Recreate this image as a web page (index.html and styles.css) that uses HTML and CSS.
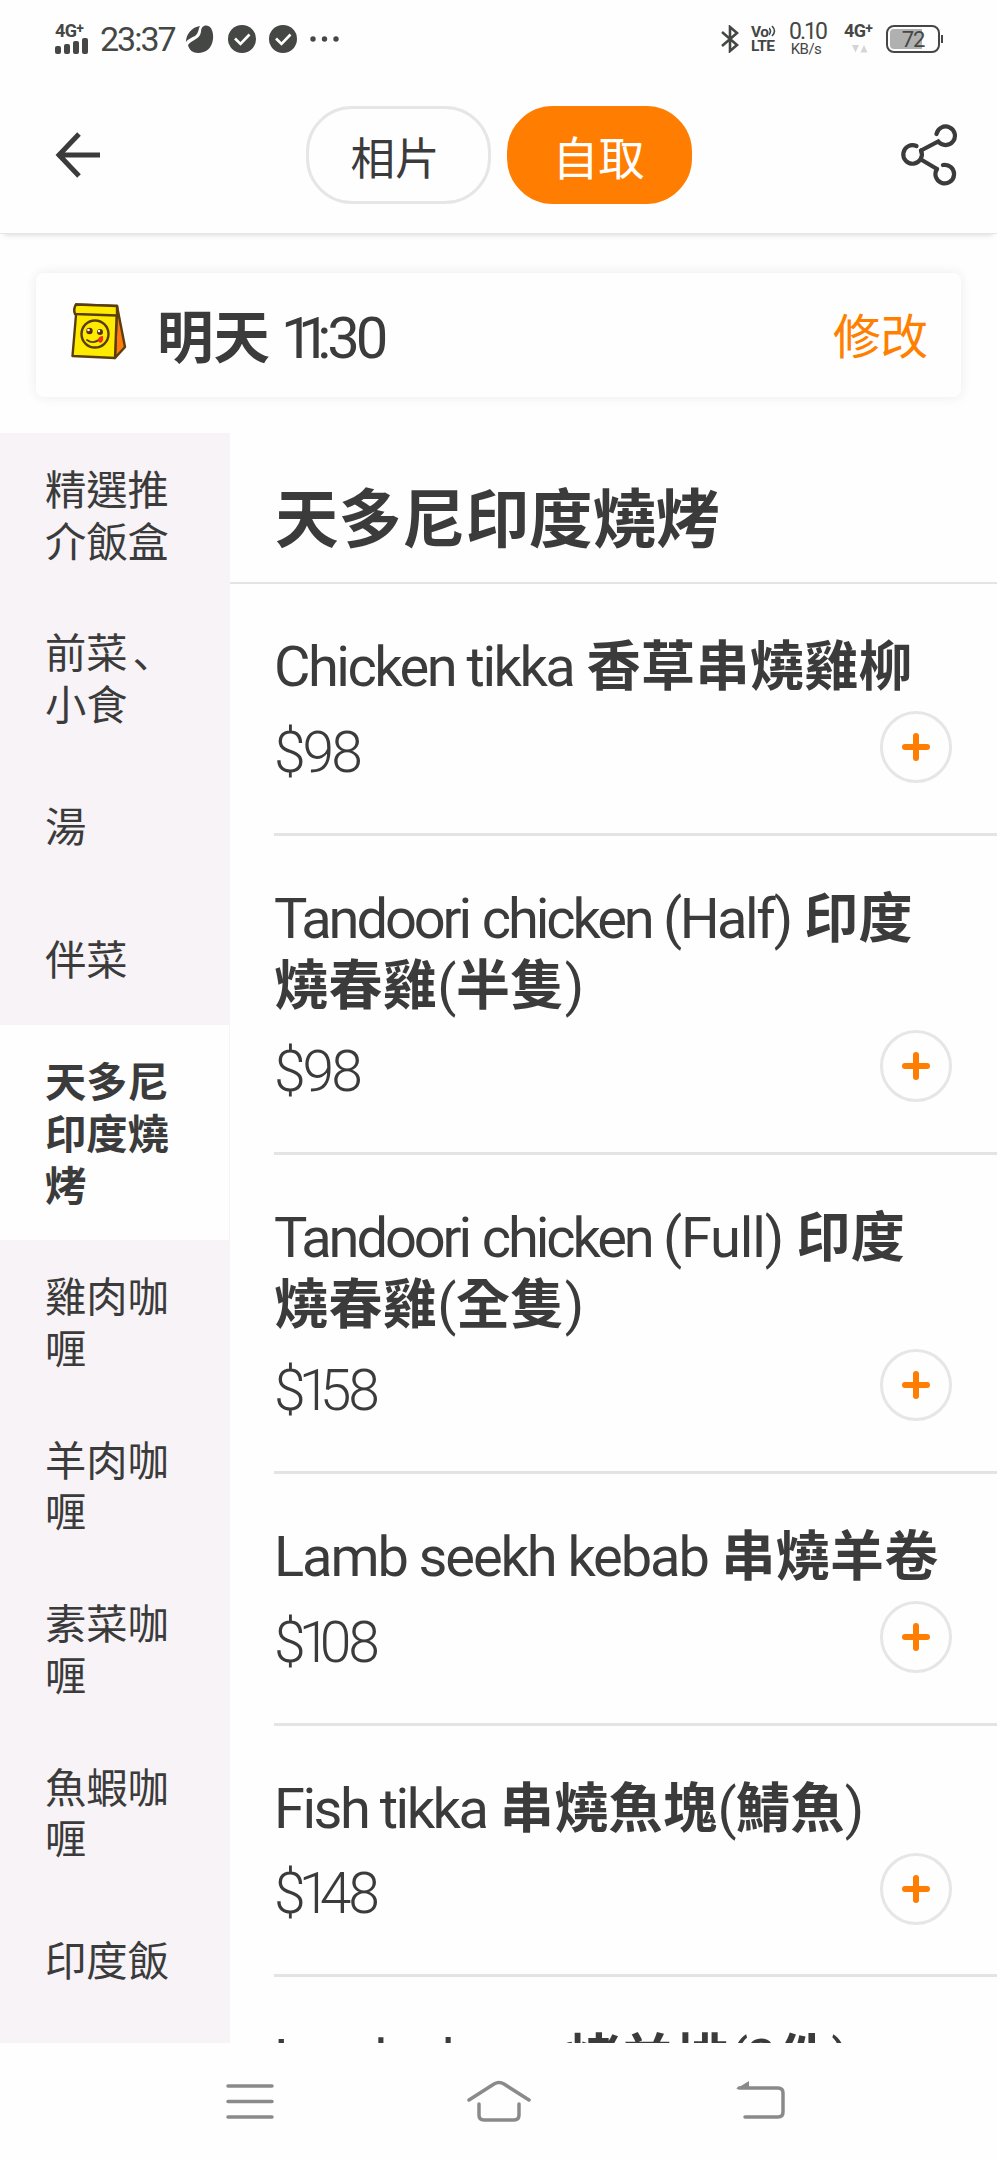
FILE: index.html
```
<!DOCTYPE html>
<html lang="zh-HK">
<head>
  <meta charset="UTF-8" />
  <meta name="viewport" content="width=device-width, initial-scale=1" />
  <title>天多尼印度燒烤</title>
  <link rel="stylesheet" href="styles.css">
</head>
<body>
  <div class="status-bar">
    <div class="signal">
      <span class="net">4G<sup>+</sup></span>
      <svg width="34" height="16" viewBox="0 0 34 16" fill="#454745">
        <rect x="0" y="8" width="6" height="8" rx="2"/>
        <rect x="9" y="6" width="6" height="10" rx="2"/>
        <rect x="18" y="3" width="6" height="13" rx="2"/>
        <rect x="27" y="0" width="6" height="16" rx="2"/>
      </svg>
    </div>
    <span class="clock">23:37</span>
    <svg class="leaf" width="28" height="28" viewBox="0 0 28 28" fill="#454745">
      <path d="M0 17C0 9 6 2 14 1C12 4 13 8 9 11C5 13 2 14 0 17Z"/>
      <path d="M2 20C6 15 11 15 14 10C16 6 14 3 18 1C23-1 28 4 27 14C26 23 20 28 12 28C7 28 3 25 2 20Z"/>
    </svg>
    <svg class="check" width="28" height="28" viewBox="0 0 28 28">
      <circle cx="14" cy="14" r="14" fill="#454745"/>
      <path d="M7 13.500l5.500 5.500L21.500 9.500" fill="none" stroke="#fff" stroke-width="2.600"/>
    </svg>
    <svg class="check" width="28" height="28" viewBox="0 0 28 28">
      <circle cx="14" cy="14" r="14" fill="#454745"/>
      <path d="M7 13.500l5.500 5.500L21.500 9.500" fill="none" stroke="#fff" stroke-width="2.600"/>
    </svg>
    <svg class="dots" width="30" height="6" viewBox="0 0 30 6" fill="#454745">
      <circle cx="3" cy="3" r="2.700"/><circle cx="14.500" cy="3" r="2.700"/><circle cx="26" cy="3" r="2.700"/>
    </svg>

    <div class="status-right">
      <svg class="bt" width="18" height="28" viewBox="0 0 18 28" fill="none" stroke="#454745" stroke-width="2.600">
        <path d="M1 7l15 13-7 6V2l7 6L1 21"/>
      </svg>
      <div class="volte">
        <span>Vo<svg width="9" height="12" viewBox="0 0 9 12" fill="none" stroke="#454745" stroke-width="1.600"><path d="M0 3q3 3 0 7M3 1q5 5 0 10"/></svg></span>
        <span>LTE</span>
      </div>
      <div class="speed">
        <span class="rate">0.10</span>
        <span class="unit">KB/s</span>
      </div>
      <div class="data">
        <span class="net">4G<sup>+</sup></span>
        <svg width="16" height="8" viewBox="0 0 16 8" fill="#d5d5d5"><path d="M0 0h7L3.500 7.500zM8.500 7.500h7L12 0z"/></svg>
      </div>
      <div class="battery"><span>72</span></div>
    </div>
  </div>

  <header class="top-nav">
    <svg class="back" width="46" height="46" viewBox="0 0 46 46" fill="none" stroke="#3b3b3b" stroke-width="5">
      <path d="M24 2L4 23l20 21M4 23h41"/>
    </svg>
    <div class="tabs">
      <button class="tab">相片</button>
      <button class="tab active">自取</button>
    </div>
    <svg class="share" width="58" height="62" viewBox="0 0 58 62" fill="none" stroke="#3b3b3b" stroke-width="4.200" stroke-linecap="round">
      <path d="M36.500 10A9.300 9.300 0 1 1 38.300 17.500L21 26.500"/>
      <path d="M16.500 22A9.300 9.300 0 1 0 21 26.500M21 35.500L37 45"/>
      <path d="M43 41A9.300 9.300 0 1 1 37 45"/>
    </svg>
  </header>

  <div class="pickup">
    <svg class="bag" width="56" height="58" viewBox="0 0 56 58" stroke="#5a3d0c" stroke-width="2.400" stroke-linejoin="round" stroke-linecap="round">
      <path d="M46 3l8 41-10 11z" fill="#ff7a10"/>
      <path d="M5 1.500L46 3l-2 52L1.500 53 5 12z" fill="#ffeb00"/>
      <path d="M5 1.500L46 3v9.500L4 11Q2 6 5 1.500z" fill="#ffeb00"/>
      <circle cx="24" cy="31" r="13.500" fill="#ffeb00"/>
      <circle cx="18.500" cy="28" r="3.200" fill="#5a2e0c" stroke="none"/>
      <circle cx="29" cy="29" r="3" fill="#5a2e0c" stroke="none"/>
      <circle cx="17.500" cy="27" r="1.300" fill="#fff" stroke="none"/>
      <circle cx="28" cy="28" r="1.200" fill="#fff" stroke="none"/>
      <path d="M16 37q7 5 14-2" fill="none" stroke-width="1.800"/>
      <path d="M27 38q0-5 5-5 1 6-3 7z" fill="#f0301c" stroke="none"/>
    </svg>
    <div class="time"><b>明天</b> <span class="hour">11</span><span class="minute">:30</span></div>
    <a class="edit">修改</a>
  </div>

  <div class="content">
    <ul class="categories">
      <li>精選推介飯盒</li>
      <li><div>前菜<span class="comma" lang="ja">、</span>小食</div></li>
      <li>湯</li>
      <li>伴菜</li>
      <li class="active">天多尼印度燒烤</li>
      <li>雞肉咖喱</li>
      <li>羊肉咖喱</li>
      <li>素菜咖喱</li>
      <li>魚蝦咖喱</li>
      <li>印度飯</li>
    </ul>

    <main class="menu">
      <h1>天多尼印度燒烤</h1>
      <div class="item">
        <h2>Chicken tikka <b>香草串燒雞柳</b></h2>
        <div class="row"><span class="price">$98</span><button class="add"></button></div>
      </div>
      <div class="item">
        <h2><span class="narrow">Tandoori chicken</span> (Half) <b>印度燒春雞</b>(<b>半隻</b>)</h2>
        <div class="row"><span class="price">$98</span><button class="add"></button></div>
      </div>
      <div class="item">
        <h2><span class="narrow">Tandoori chicken</span> <span class="wider">(Full)</span> <b>印度燒春雞</b>(<b>全隻</b>)</h2>
        <div class="row"><span class="price">$<span class="one">1</span>58</span><button class="add"></button></div>
      </div>
      <div class="item">
        <h2><span class="wide">Lamb seekh kebab</span> <b>串燒羊卷</b></h2>
        <div class="row"><span class="price">$<span class="one">1</span>08</span><button class="add"></button></div>
      </div>
      <div class="item">
        <h2>Fish tikka <b>串燒魚塊</b>(<b>鯖魚</b>)</h2>
        <div class="row"><span class="price">$<span class="one">1</span>48</span><button class="add"></button></div>
      </div>
      <div class="item">
        <h2><span class="narrow">Lamb chops</span> <b>烤羊排</b>(3<b>件</b>)</h2>
      </div>
    </main>
  </div>

  <nav class="bottom-nav">
    <svg width="66" height="46" viewBox="0 0 66 46"><path d="M11 8h44M11 23.500h44M11 39h44"/></svg>
    <svg width="66" height="46" viewBox="0 0 66 46"><path d="M3 22L28 6q5-3 10 0l25 16M13 26v11q0 5 5 5h30q5 0 5-5V26"/></svg>
    <svg width="66" height="46" viewBox="0 0 66 46"><path d="M12 10h39q5 0 5 5v19q0 5-5 5H18"/><path d="M9 11L22 3v8z" fill="#8a8a8a" stroke="none"/></svg>
  </nav>
</body>
</html>
```
FILE: styles.css
```
* {
  box-sizing: border-box;
}
body {
  font-family: Roboto, 'Noto Sans CJK TC', sans-serif;
  background: #fefefe;
  color: #3b3b3b;
  margin: 0;
  height: 2160px;
  display: flex;
  flex-direction: column;
  overflow: hidden;
}
svg {
  display: block;
  flex: none;
}
button {
  font-family: inherit;
  color: inherit;
  background: none;
  padding: 0;
}

/* status bar */
.status-bar {
  height: 77px;
  padding: 0 57px 0 55px;
  display: flex;
  align-items: center;
  color: #454745;
}
.signal {
  width: 34px;
}
.net {
  display: block;
  font-size: 18px;
  font-weight: 700;
  line-height: 14px;
  letter-spacing: -0.700px;
  white-space: nowrap;
}
.net sup {
  font-size: 14px;
  line-height: 0;
  vertical-align: 4px;
}
.clock {
  width: 86px;
  margin-left: 11px;
  font-size: 34px;
  letter-spacing: -2px;
}
.leaf {
  margin: 0 14px 0 0;
}
.check {
  margin-right: 13px;
}
.dots {
  margin-left: 0;
}
.status-right {
  display: flex;
  align-items: center;
  margin-left: auto;
}
.volte {
  display: flex;
  flex-direction: column;
  width: 26px;
  margin: 0 12px;
  font-size: 15.500px;
  font-weight: 700;
  line-height: 14px;
  letter-spacing: -0.5px;
  white-space: nowrap;
}
.volte svg {
  display: inline-block;
}
.speed {
  width: 34px;
  text-align: center;
}
.speed span {
  display: block;
}
.rate {
  font-size: 23px;
  line-height: 20px;
  letter-spacing: -2px;
}
.unit {
  font-size: 15px;
  line-height: 14px;
  letter-spacing: -0.5px;
}
.data {
  width: 30px;
  margin: 0 12px 0 21px;
}
.data svg {
  margin: 7px 0 0 8px;
}
.battery {
  position: relative;
  width: 54px;
  height: 28px;
  padding: 2px;
  border: 2px solid #454745;
  border-radius: 8px;
}
.battery span {
  display: block;
  height: 20px;
  border-radius: 4px;
  background: linear-gradient(90deg, #b0b0b0 32px, transparent 32px);
  font-size: 22px;
  line-height: 21px;
  text-align: center;
  letter-spacing: -1px;
}
.battery::after {
  content: '';
  position: absolute;
  right: -5px;
  top: 8px;
  width: 2px;
  height: 8px;
  background: #454745;
}

/* header */
.top-nav {
  height: 157px;
  padding: 0 39px 0 55px;
  display: flex;
  align-items: center;
  justify-content: space-between;
  border-bottom: 1px solid #e6e6e6;
  box-shadow: 0 5px 5px -4px rgba(0, 0, 0, 0.15);
}
.tabs {
  display: flex;
  gap: 16px;
  margin-right: 3px;
}
.tab {
  width: 185px;
  height: 98px;
  border: 3px solid #e6e6e6;
  border-radius: 46px;
  font-size: 44.500px;
  padding: 0 7px 0 0;
}
.tab.active {
  background: #ff7d00;
  border-color: #ff7d00;
  color: #fff;
  font-size: 46px;
  padding: 0 2px 0 0;
}

/* pickup time */
.pickup {
  height: 124px;
  margin: 39px 36px 36px;
  padding: 0 33px 0 35px;
  display: flex;
  align-items: center;
  border-radius: 8px;
  box-shadow: 0 0 12px rgba(60, 40, 60, 0.09);
}
.bag {
  margin-top: -6px;
}
.time {
  margin: -5px 0 0 30px;
  font-size: 56.500px;
  white-space: nowrap;
}
.time span {
  font-size: 58px;
}
.hour {
  margin-left: -3px;
  letter-spacing: -15.500px;
}
.minute {
  margin-left: 2px;
  letter-spacing: -4px;
}
.edit {
  margin: -3px 0 0 auto;
  color: #ff8000;
  font-size: 47.500px;
}

.content {
  flex: 1;
  min-height: 0;
  display: flex;
  overflow: hidden;
}

/* category list */
.categories {
  width: 230px;
  margin: 0;
  padding: 0;
  list-style: none;
  background: #f7f3f7;
  border-right: 1px solid #f7f3f7;
  font-size: 41.300px;
  line-height: 51.700px;
}
.categories li {
  min-height: 132.700px;
  padding: 33px 50px 27px 45px;
  display: flex;
  align-items: center;
}
.categories li.active {
  background: #fefefe;
  font-weight: 700;
}
.comma {
  padding-left: 5px;
  margin-right: -5px;
  font-family: 'Noto Sans CJK JP', sans-serif;
  line-height: 1;
}

/* menu */
.menu {
  flex: 1;
}
h1 {
  height: 151px;
  margin: 0;
  padding-left: 45px;
  font-size: 63.500px;
  line-height: 176px;
  border-bottom: 2px solid #e4e4e4;
}
.item {
  margin-left: 44px;
  padding: 50px 45px 47px 0;
  border-bottom: 3px solid #e4e4e4;
}
h2 {
  margin: 0;
  font-size: 56px;
  font-weight: 400;
  line-height: 67.600px;
  letter-spacing: -2.500px;
}
h2 b {
  margin: 0 0 0 2px;
  font-size: 54px;
  line-height: 1;
  letter-spacing: 0.400px;
}
h2 .narrow {
  letter-spacing: -3.100px;
  word-spacing: 2px;
}
h2 .wide {
  letter-spacing: -2.100px;
}
h2 .wider {
  letter-spacing: -1.200px;
}
.row {
  height: 84px;
  padding-top: 7px;
  display: flex;
  align-items: center;
  justify-content: space-between;
}
.price {
  padding-top: 10px;
  font-size: 57px;
  font-weight: 300;
  letter-spacing: -3px;
}
/* the 1 is set tighter than the other digits */
.price .one {
  margin-left: -4px;
  letter-spacing: -10.500px;
}
.add {
  width: 72px;
  height: 72px;
  border: 3px solid #e6e6e6;
  border-radius: 50%;
  display: grid;
  place-items: center;
}
.add::before, .add::after {
  content: '';
  grid-area: 1 / 1;
  width: 28px;
  height: 6px;
  border-radius: 3px;
  background: #ff7d00;
}
.add::after {
  transform: rotate(90deg);
}

/* system navigation */
.bottom-nav {
  height: 117px;
  padding: 35px 203px 0 217px;
  display: flex;
}
.bottom-nav svg {
  margin-right: 183px;
  fill: none;
  stroke: #8a8a8a;
  stroke-width: 3.500;
  stroke-linecap: round;
}
.bottom-nav svg:nth-child(2) {
  margin-right: 195px;
}
.bottom-nav svg:last-child {
  margin-right: 0;
}
```
